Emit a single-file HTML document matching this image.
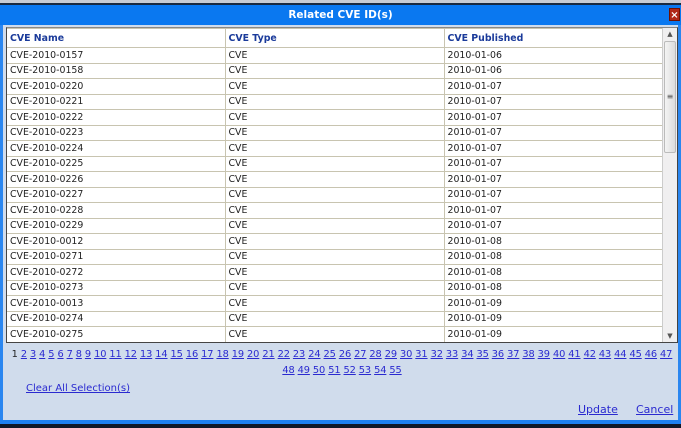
<!DOCTYPE html>
<html><head><meta charset="utf-8"><style>
*{margin:0;padding:0;box-sizing:border-box}
body{width:681px;height:428px;background:#d0dcec;position:relative;overflow:hidden;font-family:"DejaVu Sans",Verdana,sans-serif;font-size:9.4px;color:#222}
.top{position:absolute;left:0;top:0;width:681px;height:3px;background:#c8ccd4}
.dk{position:absolute;left:0;top:3px;width:681px;height:2px;background:#1a2a40}
.title{position:absolute;left:0;top:5px;width:681px;height:20px;background:#0a78f0;color:#fff;font-weight:bold;font-size:10.5px;text-align:center;line-height:20px}
.x{position:absolute;right:1px;top:8px;width:11px;height:13px;background:#b02818;color:#fff;font-size:10px;line-height:13px;text-align:center;font-weight:bold;border:1px solid #701000}
.lb{position:absolute;left:0;top:25px;width:3px;height:400px;background:#2a86f0}
.rb{position:absolute;right:0;top:25px;width:3px;height:400px;background:#2a86f0}
.bb{position:absolute;left:0;top:420px;width:681px;height:4px;background:#1e80f0}
.bd{position:absolute;left:0;top:424px;width:681px;height:4px;background:#101828}
.tbl{position:absolute;left:6px;top:27px;width:672px;height:316px;border:1px solid #444;background:#fff;border-top-color:#888;overflow:hidden}
table{border-collapse:collapse;width:656px;table-layout:fixed}
tr{height:15.5px}
td,th{border:1px solid #c8c4b0;border-left:none;padding:0 0 0 3px;text-align:left;white-space:nowrap;font-weight:normal;line-height:13px;overflow:hidden}
td+td,th+th{border-left:1px solid #c8c4b0}
tr.h{height:19px}
th{color:#1a3a9a;font-weight:bold;background:#fff}
.sb{position:absolute;right:0;top:0;width:15px;height:314px;background:#f0eff0;border-left:1px solid #ccc}
.th{position:absolute;left:1px;top:13px;width:12px;height:112px;background:linear-gradient(90deg,#f4f4f4,#dcdcdc);border:1px solid #bbb;border-radius:2px}
.ar{position:absolute;left:0;width:14px;text-align:center;font-size:7px;color:#555}
.pg{position:absolute;left:4px;top:347px;width:676px;text-align:center;line-height:16px;font-size:9.8px;white-space:nowrap;letter-spacing:-0.1px}
a{color:#2a2ad0;text-decoration:underline}
.cl{position:absolute;left:26px;top:383px;font-size:10px}
.up{position:absolute;left:578px;top:403px;font-size:11px}
.cn{position:absolute;left:636px;top:403px;font-size:11px}
</style></head><body>
<div class="top"></div><div class="dk"></div>
<div class="title">Related CVE ID(s)</div><div class="x">×</div>
<div class="lb"></div><div class="rb"></div>
<div class="tbl">
<table>
<colgroup><col style="width:218px"><col style="width:219px"><col style="width:219px"></colgroup>
<tr class="h"><th>CVE Name</th><th>CVE Type</th><th>CVE Published</th></tr>
<tr><td>CVE-2010-0157</td><td>CVE</td><td>2010-01-06</td></tr>
<tr><td>CVE-2010-0158</td><td>CVE</td><td>2010-01-06</td></tr>
<tr><td>CVE-2010-0220</td><td>CVE</td><td>2010-01-07</td></tr>
<tr><td>CVE-2010-0221</td><td>CVE</td><td>2010-01-07</td></tr>
<tr><td>CVE-2010-0222</td><td>CVE</td><td>2010-01-07</td></tr>
<tr><td>CVE-2010-0223</td><td>CVE</td><td>2010-01-07</td></tr>
<tr><td>CVE-2010-0224</td><td>CVE</td><td>2010-01-07</td></tr>
<tr><td>CVE-2010-0225</td><td>CVE</td><td>2010-01-07</td></tr>
<tr><td>CVE-2010-0226</td><td>CVE</td><td>2010-01-07</td></tr>
<tr><td>CVE-2010-0227</td><td>CVE</td><td>2010-01-07</td></tr>
<tr><td>CVE-2010-0228</td><td>CVE</td><td>2010-01-07</td></tr>
<tr><td>CVE-2010-0229</td><td>CVE</td><td>2010-01-07</td></tr>
<tr><td>CVE-2010-0012</td><td>CVE</td><td>2010-01-08</td></tr>
<tr><td>CVE-2010-0271</td><td>CVE</td><td>2010-01-08</td></tr>
<tr><td>CVE-2010-0272</td><td>CVE</td><td>2010-01-08</td></tr>
<tr><td>CVE-2010-0273</td><td>CVE</td><td>2010-01-08</td></tr>
<tr><td>CVE-2010-0013</td><td>CVE</td><td>2010-01-09</td></tr>
<tr><td>CVE-2010-0274</td><td>CVE</td><td>2010-01-09</td></tr>
<tr><td>CVE-2010-0275</td><td>CVE</td><td>2010-01-09</td></tr>
</table>
<div class="sb"><div class="ar" style="top:2px">▲</div><div class="th"></div><div class="ar" style="top:64px;font-size:8px">≡</div><div class="ar" style="bottom:2px">▼</div></div>
</div>
<div class="pg">1 <a>2</a> <a>3</a> <a>4</a> <a>5</a> <a>6</a> <a>7</a> <a>8</a> <a>9</a> <a>10</a> <a>11</a> <a>12</a> <a>13</a> <a>14</a> <a>15</a> <a>16</a> <a>17</a> <a>18</a> <a>19</a> <a>20</a> <a>21</a> <a>22</a> <a>23</a> <a>24</a> <a>25</a> <a>26</a> <a>27</a> <a>28</a> <a>29</a> <a>30</a> <a>31</a> <a>32</a> <a>33</a> <a>34</a> <a>35</a> <a>36</a> <a>37</a> <a>38</a> <a>39</a> <a>40</a> <a>41</a> <a>42</a> <a>43</a> <a>44</a> <a>45</a> <a>46</a> <a>47</a><br><a>48</a> <a>49</a> <a>50</a> <a>51</a> <a>52</a> <a>53</a> <a>54</a> <a>55</a></div>
<a class="cl">Clear All Selection(s)</a>
<a class="up">Update</a><a class="cn">Cancel</a>
<div class="bb"></div><div class="bd"></div>
</body></html>
